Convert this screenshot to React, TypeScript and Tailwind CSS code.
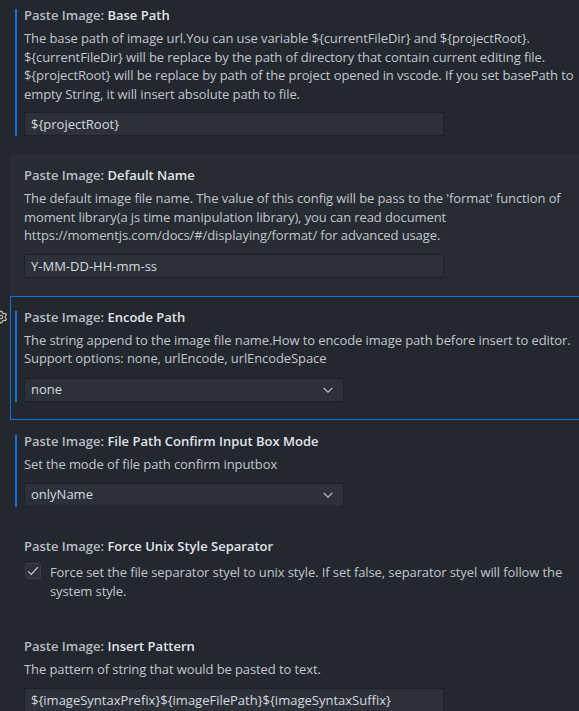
import { Settings } from "lucide-react";
import type { ReactNode } from "react";

const blue = "bg-[#1d6fd8]";

function Title({ label }: { label: string }) {
  return (
    <div className="h-[18px] leading-[18px] font-semibold whitespace-nowrap">
      <span className="text-[#b9bdc3]">Paste Image: </span>
      <span className="text-[#e1e4e8]">{label}</span>
    </div>
  );
}

function Desc({ children }: { children: ReactNode }) {
  return (
    <div className="mt-[5px] leading-[18.5px] tracking-[-0.1px] text-[#c2c6cc] whitespace-nowrap">{children}</div>
  );
}

function TextInput({ value, width = "w-[420px]" }: { value: string; width?: string }) {
  return (
    <div
      className={`mt-[9px] h-[24px] ${width} border border-[#1d2025] bg-[#2c3139] px-[6px] leading-[22px] text-[#d6d9de] whitespace-nowrap`}
    >
      {value}
    </div>
  );
}

function Select({ value }: { value: string }) {
  return (
    <div className="mt-[10px] flex h-[24px] w-[320px] items-center justify-between rounded-[2px] border border-[#1d2025] bg-[#2c3139] pl-[6px] pr-[8px] text-[#d6d9de]">
      <span>{value}</span>
      <svg width="14" height="14" viewBox="0 0 16 16" fill="none">
        <path d="M3 5.5l5 5 5-5" stroke="#c5c8ce" strokeWidth="1.2" />
      </svg>
    </div>
  );
}

function Row({
  children,
  modified,
  hover,
  focused,
  extra = "pb-[18px]",
}: {
  children: ReactNode;
  modified?: boolean;
  hover?: boolean;
  focused?: boolean;
  extra?: string;
}) {
  return (
    <div
      className={`relative pl-[14px] pt-[12px] ${extra} ${hover ? "bg-[#272b32]" : ""} ${
        focused ? "outline outline-1 -outline-offset-1 outline-[#1d6fd8]" : ""
      }`}
    >
      {modified && <div className={`absolute left-[5px] top-[15px] bottom-[18px] w-[2px] ${blue}`} />}
      {focused && (
        <Settings size={14} strokeWidth={2} className="absolute left-[-16px] top-[14px] text-[#c9c3b8]" />
      )}
      {children}
    </div>
  );
}

export default function App() {
  return (
    <div className="h-[711px] overflow-hidden bg-[#23272e] text-[13px] font-['Open_Sans','Noto_Sans',sans-serif]">
      <div className="-mt-[6px] ml-[10px] -mr-[20px]">
        <Row modified>
          <Title label="Base Path" />
          <Desc>
            The base path of image url.You can use variable ${"{currentFileDir}"} and ${"{projectRoot}"}.
            <br />${"{currentFileDir}"} will be replace by the path of directory that contain current editing file.
            <br />${"{projectRoot}"} will be replace by path of the project opened in vscode. If you set basePath to
            <br />
            empty String, it will insert absolute path to file.
          </Desc>
          <TextInput value="${projectRoot}" />
        </Row>

        <Row hover>
          <Title label="Default Name" />
          <Desc>
            The default image file name. The value of this config will be pass to the 'format' function of
            <br />
            moment library(a js time manipulation library), you can read document
            <br />
            https://momentjs.com/docs/#/displaying/format/ for advanced usage.
          </Desc>
          <TextInput value="Y-MM-DD-HH-mm-ss" />
        </Row>

        <Row modified focused>
          <Title label="Encode Path" />
          <Desc>
            The string append to the image file name.How to encode image path before insert to editor.
            <br />
            Support options: none, urlEncode, urlEncodeSpace
          </Desc>
          <Select value="none" />
        </Row>

        <Row modified>
          <Title label="File Path Confirm Input Box Mode" />
          <Desc>Set the mode of file path confirm inputbox</Desc>
          <Select value="onlyName" />
        </Row>

        <Row extra="pb-[25px]">
          <Title label="Force Unix Style Separator" />
          <div className="mt-[8px] flex items-start gap-[9px] pl-[1px]">
            <div className="flex h-[16px] w-[16px] shrink-0 items-center justify-center rounded-[3px] border border-[#3d424a] bg-[#2c3139]">
              <svg width="14" height="14" viewBox="0 0 16 16" fill="none">
                <path d="M2.5 8.5l3.5 3.5 7.5-8.5" stroke="#cfd2d7" strokeWidth="1.3" />
              </svg>
            </div>
            <div className="leading-[18.5px] tracking-[-0.1px] text-[#c2c6cc] whitespace-nowrap">
              Force set the file separator styel to unix style. If set false, separator styel will follow the
              <br />
              system style.
            </div>
          </div>
        </Row>

        <Row>
          <Title label="Insert Pattern" />
          <Desc>The pattern of string that would be pasted to text.</Desc>
          <TextInput value="${imageSyntaxPrefix}${imageFilePath}${imageSyntaxSuffix}" />
        </Row>
      </div>
    </div>
  );
}
